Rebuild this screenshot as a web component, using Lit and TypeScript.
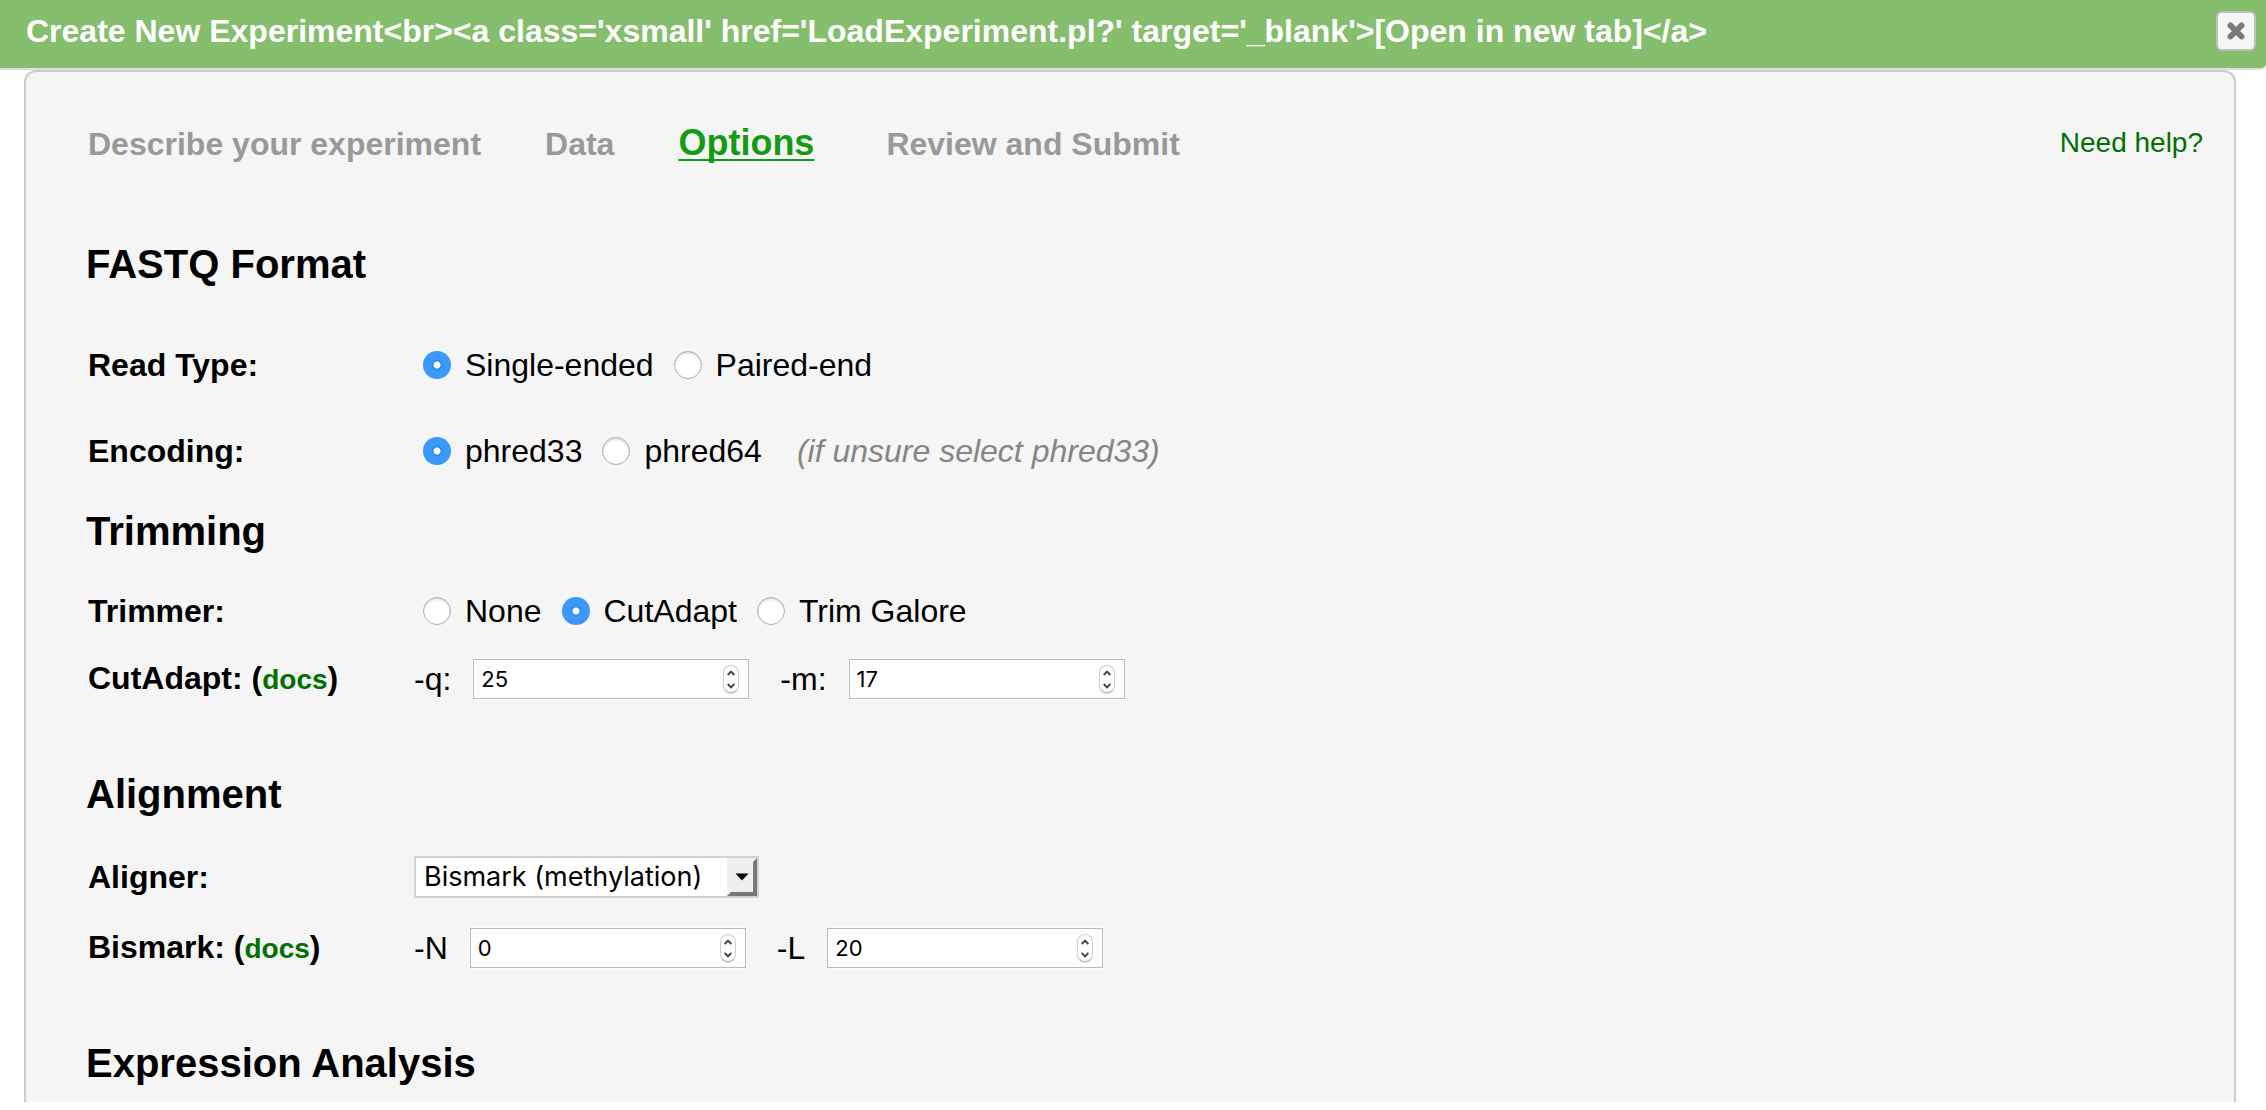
import { LitElement, html, css } from "lit";
import { customElement, property, state } from "lit/decorators.js";

@customElement("number-field")
class NumberField extends LitElement {
  @property() label = "";
  @property({ type: Number }) value = 0;

  static styles = css`
    :host {
      display: block;
    }
    .field {
      display: flex;
      align-items: center;
      gap: 21px;
      font-size: 32px;
      line-height: 36px;
    }
    .box {
      display: flex;
      align-items: center;
      box-sizing: border-box;
      width: 276px;
      height: 40px;
      margin: 1px;
      padding: 0 9px 0 7px;
      border: 1px solid #b9b9b9;
      background: #fff;
      box-shadow: 0 0 0 1px #fcfcfc;
    }
    .input {
      flex: 1;
      min-width: 0;
      padding: 0;
      border: 0;
      outline: 0;
      background: none;
      color: #000;
      font: 22px/28px Inter, Roboto, sans-serif;
      appearance: textfield;
      -moz-appearance: textfield;
    }
    .input::-webkit-inner-spin-button,
    .input::-webkit-outer-spin-button {
      appearance: none;
      margin: 0;
    }
    .spinner {
      display: flex;
      flex-direction: column;
      box-sizing: border-box;
      width: 16px;
      height: 28px;
      border: 1px solid #d0d0d0;
      border-bottom-color: #b4b4b4;
      border-radius: 8px;
      background: #fff;
      box-shadow: 0 1px 1px #ddd;
    }
    .step {
      display: flex;
      flex: 1;
      align-items: center;
      justify-content: center;
      min-height: 0;
      padding: 0;
      border: 0;
      background: none;
    }
    .chevron {
      display: block;
      width: 8px;
      height: 6px;
      fill: none;
      stroke: #444;
      stroke-width: 2;
    }
  `;

  private stepBy(delta: number) {
    this.value += delta;
  }

  render() {
    return html`
      <div class="field">
        <label for="number">${this.label}</label>
        <div class="box">
          <input id="number" class="input" type="number" .value=${String(this.value)}
            @input=${(e: Event) => (this.value = Number((e.target as HTMLInputElement).value))} />
          <div class="spinner">
            <button class="step" type="button" tabindex="-1" aria-label="Increase" @click=${() => this.stepBy(1)}>
              <svg class="chevron" viewBox="0 0 8 6"><path d="M0.7 5 4 1.6 7.3 5" /></svg>
            </button>
            <button class="step" type="button" tabindex="-1" aria-label="Decrease" @click=${() => this.stepBy(-1)}>
              <svg class="chevron" viewBox="0 0 8 6"><path d="M0.7 1 4 4.4 7.3 1" /></svg>
            </button>
          </div>
        </div>
      </div>
    `;
  }
}

@customElement("app-root")
class AppRoot extends LitElement {
  @state() private readType = "Single-ended";
  @state() private encoding = "phred33";
  @state() private trimmer = "CutAdapt";

  static styles = css`
    :host {
      display: block;
      font-family: "Liberation Sans", Arial, sans-serif;
      font-size: 32px;
      line-height: 36px;
      color: #000;
      background: #fff;
    }
    .titlebar {
      display: flex;
      align-items: center;
      justify-content: space-between;
      box-sizing: border-box;
      height: 70px;
      padding: 0 10px 6px 26px;
      border-bottom: 2px solid #ddd;
      border-radius: 0 0 6px 0;
      background: #85be6c;
    }
    .title {
      margin: 0;
      font-size: 32px;
      line-height: 36px;
      color: #fff;
    }
    .close {
      display: flex;
      align-items: center;
      justify-content: center;
      width: 40px;
      height: 40px;
      padding: 0;
      border: 2px solid #bfbfbf;
      border-radius: 6px;
      background: #f6f6f6;
    }
    .cross {
      display: block;
      width: 20px;
      height: 20px;
      stroke: #7a7a7a;
      stroke-width: 6;
      stroke-linecap: round;
    }
    .panel {
      margin: 0 30px 0 24px;
      padding: 50px 29px 6px 60px;
      border: 2px solid #ccc;
      border-bottom: 0;
      border-radius: 12px 12px 0 0;
      background: #f5f5f5;
    }
    .nav {
      display: flex;
      align-items: flex-start;
      justify-content: space-between;
      margin-bottom: 76px;
      padding: 0 2px;
    }
    .steps {
      display: flex;
      align-items: baseline;
      gap: 64px;
      margin: 0;
      padding: 0;
      list-style: none;
      font-weight: bold;
      line-height: 42px;
    }
    .step {
      color: #999;
      text-decoration: none;
    }
    .current {
      margin-right: 8px;
      color: #149b14;
      font-size: 36px;
      text-decoration: underline 2px;
      text-underline-offset: 4px;
      text-decoration-skip-ink: none;
    }
    .help {
      color: #007000;
      font-size: 28px;
      line-height: 42px;
      text-decoration: none;
    }
    .section {
      display: grid;
      gap: 29px;
      margin-bottom: 71px;
    }
    .format {
      gap: 50px;
      margin-bottom: 39px;
    }
    .section:last-child {
      margin-bottom: 0;
    }
    .heading {
      margin: 0 0 10px;
      font-size: 40px;
      line-height: 46px;
    }
    .row {
      display: grid;
      grid-template-columns: 326px 1fr;
      align-items: center;
      padding-left: 2px;
    }
    .name {
      font-weight: bold;
    }
    .docs {
      color: #007000;
      font-size: 28px;
      text-decoration: none;
    }
    .radios {
      display: flex;
      flex-wrap: wrap;
      gap: 20px;
      padding-left: 9px;
    }
    .choice {
      display: flex;
      align-items: center;
      gap: 14px;
    }
    .radio {
      appearance: none;
      box-sizing: border-box;
      width: 28px;
      height: 28px;
      margin: 0;
      border: 1px solid #adadad;
      border-radius: 50%;
      background: #fff;
      box-shadow: inset 0 2px 2px #e4e4e4;
    }
    .radio:checked {
      border: 0;
      background: radial-gradient(circle, #fff 3px, #2f86e4 4px, #3b99fc 6px);
      box-shadow: none;
    }
    .hint {
      margin-left: 15px;
      color: #858585;
      font-style: italic;
    }
    .numbers {
      display: flex;
      flex-wrap: wrap;
      gap: 30px;
    }
    .picker {
      display: grid;
      box-sizing: border-box;
      width: 345px;
      height: 42px;
      border: 2px solid #d2d2d2;
      background: #fff;
    }
    .select {
      grid-area: 1 / 1;
      appearance: none;
      width: 100%;
      padding: 0 34px 0 8px;
      border: 0;
      border-radius: 0;
      background: none;
      color: #000;
      font: 27px/36px Inter, Roboto, sans-serif;
    }
    .arrow {
      grid-area: 1 / 1;
      justify-self: end;
      display: flex;
      align-items: center;
      justify-content: center;
      box-sizing: border-box;
      width: 30px;
      height: 38px;
      border: 4px solid;
      border-color: #f0f0f0 #777 #777 #f0f0f0;
      background: #eee;
      pointer-events: none;
    }
    .triangle {
      display: block;
      width: 14px;
      height: 8px;
    }
  `;

  private choices(name: string, options: string[], current: string, pick: (v: string) => void) {
    return options.map(
      (option) => html`
        <label class="choice">
          <input class="radio" type="radio" name=${name} .checked=${option === current} @change=${() => pick(option)} />
          <span>${option}</span>
        </label>
      `
    );
  }

  render() {
    return html`
      <header class="titlebar">
        <h1 class="title">
          ${"Create New Experiment<br><a class='xsmall' href='LoadExperiment.pl?' target='_blank'>[Open in new tab]</a>"}
        </h1>
        <button class="close" type="button" aria-label="Close">
          <svg class="cross" viewBox="0 0 20 20"><path d="M4.5 4.5 15.5 15.5M15.5 4.5 4.5 15.5" /></svg>
        </button>
      </header>

      <main class="panel">
        <nav class="nav">
          <ol class="steps">
            <li><a class="step" href="#describe">Describe your experiment</a></li>
            <li><a class="step" href="#data">Data</a></li>
            <li><a class="step current" href="#options" aria-current="step">Options</a></li>
            <li><a class="step" href="#review">Review and Submit</a></li>
          </ol>
          <a class="help" href="#help">Need help?</a>
        </nav>

        <section class="section format">
          <h2 class="heading">FASTQ Format</h2>
          <div class="row" role="radiogroup" aria-labelledby="read-type">
            <span class="name" id="read-type">Read Type:</span>
            <div class="radios">
              ${this.choices("read", ["Single-ended", "Paired-end"], this.readType, (v) => (this.readType = v))}
            </div>
          </div>
          <div class="row" role="radiogroup" aria-labelledby="encoding">
            <span class="name" id="encoding">Encoding:</span>
            <div class="radios">
              ${this.choices("encoding", ["phred33", "phred64"], this.encoding, (v) => (this.encoding = v))}
              <span class="hint">(if unsure select phred33)</span>
            </div>
          </div>
        </section>

        <section class="section">
          <h2 class="heading">Trimming</h2>
          <div class="row" role="radiogroup" aria-labelledby="trimmer">
            <span class="name" id="trimmer">Trimmer:</span>
            <div class="radios">
              ${this.choices("trimmer", ["None", "CutAdapt", "Trim Galore"], this.trimmer, (v) => (this.trimmer = v))}
            </div>
          </div>
          <div class="row">
            <span class="name">CutAdapt: (<a class="docs" href="#cutadapt">docs</a>)</span>
            <div class="numbers">
              <number-field label="-q:" value="25"></number-field>
              <number-field label="-m:" value="17"></number-field>
            </div>
          </div>
        </section>

        <section class="section">
          <h2 class="heading">Alignment</h2>
          <div class="row">
            <label class="name" for="aligner">Aligner:</label>
            <div class="picker">
              <select class="select" id="aligner">
                <option>Bismark (methylation)</option>
              </select>
              <span class="arrow">
                <svg class="triangle" viewBox="0 0 14 8"><path d="M0.5 0.5H13.5L7 7.5Z" /></svg>
              </span>
            </div>
          </div>
          <div class="row">
            <span class="name">Bismark: (<a class="docs" href="#bismark">docs</a>)</span>
            <div class="numbers">
              <number-field label="-N" value="0"></number-field>
              <number-field label="-L" value="20"></number-field>
            </div>
          </div>
        </section>

        <section class="section">
          <h2 class="heading">Expression Analysis</h2>
        </section>
      </main>
    `;
  }
}
